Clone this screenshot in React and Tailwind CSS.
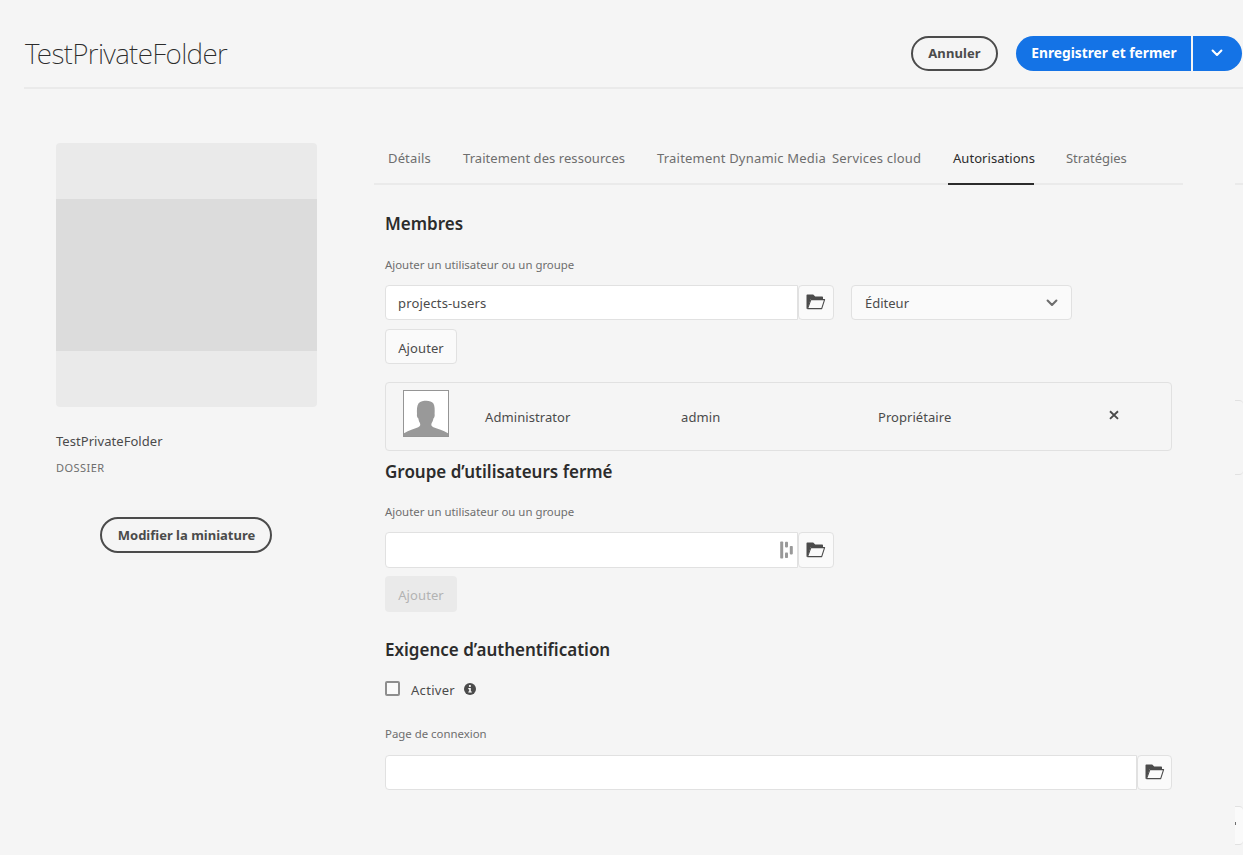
import React from 'react';

function FolderOpenIcon() {
  return (
    <svg width="20" height="16" viewBox="0 0 20 16" className="block shrink-0">
      <path d="M0.5 14.8V1.3C0.5 0.8 0.8 0.5 1.3 0.5H7.2L9.2 2.4H16C16.6 2.4 17 2.8 17 3.4V5.2H4.6L1.6 14.8Z" fill="#4b4b4b" />
      <path d="M4.9 5.6H18.6L15.7 14.6H1.6Z" fill="#fafafa" stroke="#4b4b4b" strokeWidth="1.1" strokeLinejoin="round" />
    </svg>
  );
}

function ChevronIcon({ className }) {
  return (
    <svg width="12" height="8" viewBox="0 0 12 8" className={className}>
      <path d="M1.6 1.6L6 6L10.4 1.6" fill="none" stroke="currentColor" strokeWidth="2.1" strokeLinecap="round" strokeLinejoin="round" />
    </svg>
  );
}

function AvatarIcon() {
  return (
    <svg width="46" height="47" viewBox="0 0 46 47" className="block shrink-0">
      <rect x="0.5" y="0.5" width="45" height="46" fill="#fff" stroke="#959595" />
      <path
        d="M1 46V43.2C6 40.6 11 39 15.2 37.3C17.6 36.3 17.6 34.4 16.8 32.8C15.8 31.4 15.6 30 15.4 28.6C14.2 27.6 13.6 25.6 14 24C13.8 20 13.8 15.6 15.6 13.2C17.4 11.4 20.6 10.8 23.4 10.8C26.2 10.8 29 11.8 30.4 13.6C31.8 16 31.8 20 31.6 24C32 25.6 31.4 27.6 30.4 28.6C30.2 30 29.8 31.4 28.8 32.8C28 34.4 28 36.3 30.4 37.3C35 39 40 40.6 45 43.2V46Z"
        fill="#999"
      />
    </svg>
  );
}

function BrowseButton({ className }) {
  return (
    <button className={`flex shrink-0 items-center justify-center rounded border border-[#e1e1e1] bg-[#fafafa] pb-px ${className}`}>
      <FolderOpenIcon />
    </button>
  );
}

function SectionTitle({ children }) {
  return <h2 className="h-6 pt-px text-[17px] leading-6 font-semibold whitespace-nowrap text-[#2c2c2c]">{children}</h2>;
}

function FieldLabel({ children }) {
  return <label className="block h-4 text-[11.4px] leading-4 whitespace-nowrap text-[#6e6e6e]">{children}</label>;
}

const tabs = [
  { label: 'Détails', className: 'w-[75px] tracking-[0.15px] border-[#eaeaea]' },
  { label: 'Traitement des ressources', className: 'w-[194px] tracking-[0.06px] border-[#eaeaea]' },
  { label: 'Traitement Dynamic Media', className: 'w-[175px] tracking-[0.2px] border-[#eaeaea]' },
  { label: 'Services cloud', className: 'w-[116px] tracking-[0.2px] border-[#eaeaea]' },
  { label: 'Autorisations', className: 'w-[86px] pl-[5px] mr-[32px] tracking-[0.05px] text-[#2c2c2c] border-[#2c2c2c]' },
  { label: 'Stratégies', className: 'w-[117px] tracking-[-0.05px] border-[#eaeaea]' },
];

export default function App() {
  return (
    <div className="flex h-[855px] w-[1243px] flex-col overflow-hidden bg-[#f5f5f5] font-['Noto_Sans',sans-serif] text-[13px] text-[#4b4b4b]">
      <header className="ml-6 flex h-[89px] shrink-0 items-start justify-between border-b-2 border-[#eaeaea]">
        <h1 className="mt-[33px] ml-px text-[28px] leading-10 font-extralight tracking-[-0.65px] text-[#2c2c2c]">TestPrivateFolder</h1>
        <div className="mt-9 mr-px flex h-[35px]">
          <button className="mr-[18px] w-[87px] rounded-full border-2 border-[#4b4b4b] pt-px font-bold tracking-[0.1px]">Annuler</button>
          <button className="mr-0.5 w-[175px] rounded-l-full bg-[#1473e6] pl-px text-[13.75px] font-bold whitespace-nowrap text-white">
            Enregistrer et fermer
          </button>
          <button className="flex w-[49px] items-center justify-center rounded-r-full bg-[#1473e6] pb-px text-white">
            <ChevronIcon className="mr-0.5" />
          </button>
        </div>
      </header>

      <div className="flex flex-1">
        <aside className="ml-14 flex w-[261px] shrink-0 flex-col pt-[54px]">
          <div className="flex h-[264px] flex-col justify-center overflow-hidden rounded bg-[#eaeaea]">
            <div className="h-[152px] bg-[#dcdcdc]" />
          </div>
          <div className="mt-6 h-5 leading-5 tracking-[0.05px]">TestPrivateFolder</div>
          <div className="mt-[9px] h-4 text-[11px] leading-4 tracking-[0.45px] text-[#6e6e6e]">DOSSIER</div>
          <button className="mt-[41px] ml-11 h-9 w-[172px] rounded-full border-2 border-[#4b4b4b] pt-px pl-px font-bold whitespace-nowrap">
            Modifier la miniature
          </button>
        </aside>

        <main className="ml-[57px] w-[809px] shrink-0 pt-[54px]">
          <nav className="flex h-[42px] border-b-2 border-[#eaeaea] pl-[14px] text-[#6e6e6e]">
            {tabs.map((tab) => (
              <div key={tab.label} className={`h-[42px] shrink-0 border-b-2 pt-[5px] leading-5 whitespace-nowrap ${tab.className}`}>
                {tab.label}
              </div>
            ))}
          </nav>

          <div className="ml-[11px] w-[787px]">
            <section className="pt-[26px]">
              <SectionTitle>Membres</SectionTitle>
              <div className="mt-[22px]">
                <FieldLabel>Ajouter un utilisateur ou un groupe</FieldLabel>
              </div>
              <div className="mt-3 flex h-[35px]">
                <div className="flex w-[413px] items-center rounded-l border border-[#e1e1e1] bg-white pt-0.5 pl-3 tracking-[0.15px]">projects-users</div>
                <BrowseButton className="w-9 pr-px" />
                <div className="ml-[17px] flex w-[221px] items-center justify-between rounded border border-[#e1e1e1] bg-[#fafafa] pr-[13px] pl-[13px]">
                  <span className="pt-0.5">Éditeur</span>
                  <ChevronIcon className="text-[#6e6e6e]" />
                </div>
              </div>
              <button className="mt-[9px] block h-[35px] w-[72px] rounded border border-[#e1e1e1] bg-[#fafafa] pt-1 tracking-[0.1px]">Ajouter</button>
              <div className="mt-[18px] flex h-[69px] items-start rounded border border-[#e1e1e1] pt-[7px] pl-[17px]">
                <AvatarIcon />
                <span className="mt-[17px] ml-9 w-[196px] leading-5 tracking-[0.08px]">Administrator</span>
                <span className="mt-[17px] w-[197px] leading-5 tracking-[0.1px]">admin</span>
                <span className="mt-[17px] w-[231px] leading-5 tracking-[0.05px]">Propriétaire</span>
                <svg width="10" height="10" viewBox="0 0 10 10" className="mt-5">
                  <path d="M1 1.2L9 8.9M9 1.2L1 8.9" stroke="#4b4b4b" strokeWidth="1.9" />
                </svg>
              </div>
            </section>

            <section className="pt-2">
              <SectionTitle>Groupe d’utilisateurs fermé</SectionTitle>
              <div className="mt-[21px]">
                <FieldLabel>Ajouter un utilisateur ou un groupe</FieldLabel>
              </div>
              <div className="mt-3 flex h-9">
                <div className="flex w-[413px] items-center justify-end rounded-l border border-[#e1e1e1] bg-white pr-1">
                  <svg width="13" height="18" viewBox="0 0 13 18">
                    <g fill="#999">
                      <rect x="0.2" y="0.5" width="3" height="17" rx="0.8" />
                      <rect x="5" y="0.8" width="3" height="5.6" rx="0.8" />
                      <rect x="5" y="11.4" width="3" height="5.6" rx="0.8" />
                      <rect x="9.8" y="5" width="3" height="8.4" rx="0.8" />
                    </g>
                  </svg>
                </div>
                <BrowseButton className="w-9 pr-px" />
              </div>
              <button className="mt-2 block h-9 w-[72px] rounded bg-[#eaeaea] pt-1 tracking-[0.1px] text-[#b3b3b3]">Ajouter</button>
            </section>

            <section className="pt-[25px]">
              <SectionTitle>Exigence d’authentification</SectionTitle>
              <div className="mt-[18px] flex h-5 items-start">
                <span className="mt-0.5 h-[15px] w-[15px] rounded-xs border-2 border-[#8e8e8e] bg-[#fafafa]" />
                <span className="ml-[11px] w-[53px] leading-[22px] tracking-[0.3px]">Activer</span>
                <svg width="12" height="12" viewBox="0 0 12 12" className="mt-1">
                  <circle cx="6" cy="6" r="6" fill="#4b4b4b" />
                  <circle cx="5.9" cy="3" r="1.1" fill="#fff" />
                  <path d="M4.3 5H6.8V8.4H7.8V9.6H4.3V8.4H5.2V6.2H4.3Z" fill="#fff" />
                </svg>
              </div>
              <div className="mt-[27px]">
                <FieldLabel>Page de connexion</FieldLabel>
              </div>
              <div className="mt-[13px] flex h-[35px]">
                <div className="w-[752px] rounded-l border border-[#e1e1e1] bg-white" />
                <BrowseButton className="w-[35px]" />
              </div>
            </section>
          </div>
        </main>

        <div className="ml-[52px] flex w-2 shrink-0 flex-col overflow-hidden pt-[94px]">
          <div className="h-0.5 shrink-0 bg-[#eaeaea]" />
          <div className="mt-[215px] h-[75px] shrink-0 rounded-r-sm border-y border-[#e1e1e1]" />
          <div className="mt-[331px] flex h-[39px] shrink-0 items-center rounded-r-sm border-y border-[#e1e1e1] bg-[#fafafa]">
            <span className="mt-[-4px] h-[3px] w-px bg-[#6e6e6e]" />
          </div>
        </div>
      </div>
    </div>
  );
}
